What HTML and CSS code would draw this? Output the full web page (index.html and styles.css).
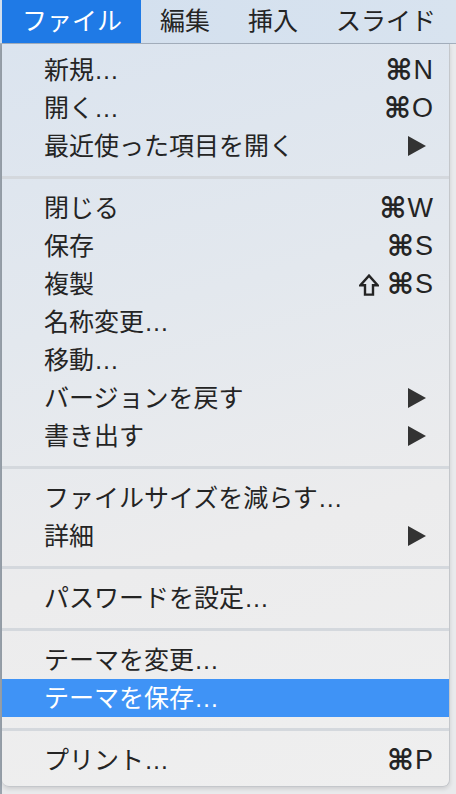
FILE: index.html
```html
<!DOCTYPE html>
<html lang="ja">
<head>
<meta charset="utf-8">
<title>ファイル メニュー</title>
<link rel="stylesheet" href="styles.css">
</head>
<body>
<div class="screen">
  <nav class="menubar">
    <span class="mb-item active">ファイル</span>
    <span class="mb-item">編集</span>
    <span class="mb-item">挿入</span>
    <span class="mb-item">スライド</span>
  </nav>
  <div class="menu">
    <div class="row"><span class="label">新規…</span><span class="key"><span class="sym">⌘</span>N</span></div>
    <div class="row"><span class="label">開く…</span><span class="key"><span class="sym">⌘</span>O</span></div>
    <div class="row"><span class="label">最近使った項目を開く</span><span class="arrow"></span></div>
    <div class="sep"></div>
    <div class="row"><span class="label">閉じる</span><span class="key"><span class="sym">⌘</span>W</span></div>
    <div class="row"><span class="label">保存</span><span class="key"><span class="sym">⌘</span>S</span></div>
    <div class="row"><span class="label">複製</span><span class="key"><svg class="shift" width="20" height="22" viewBox="0 0 20 22" aria-label="⇧"><path d="M10 1.6 L18.6 11.2 H14 V20.6 H6 V11.2 H1.4 Z" fill="none" stroke="#242424" stroke-width="2.4" stroke-linejoin="miter"/></svg><span class="sym">⌘</span>S</span></div>
    <div class="row"><span class="label">名称変更…</span></div>
    <div class="row"><span class="label">移動…</span></div>
    <div class="row"><span class="label">バージョンを戻す</span><span class="arrow"></span></div>
    <div class="row"><span class="label">書き出す</span><span class="arrow"></span></div>
    <div class="sep"></div>
    <div class="row"><span class="label">ファイルサイズを減らす…</span></div>
    <div class="row"><span class="label">詳細</span><span class="arrow"></span></div>
    <div class="sep"></div>
    <div class="row"><span class="label">パスワードを設定…</span></div>
    <div class="sep"></div>
    <div class="row"><span class="label">テーマを変更…</span></div>
    <div class="row selected"><span class="label">テーマを保存…</span></div>
    <div class="sep"></div>
    <div class="row"><span class="label">プリント…</span><span class="key"><span class="sym">⌘</span>P</span></div>
  </div>
</div>
</body>
</html>
```

FILE: styles.css
```css
html, body {
  margin: 0;
  padding: 0;
}
body {
  width: 456px;
  height: 794px;
  overflow: hidden;
  background: #e6e7e9;
  font-family: "Liberation Sans", "Noto Sans CJK JP", "DejaVu Sans", sans-serif;
  color: #242424;
}
.screen {
  width: 456px;
  height: 794px;
  background: linear-gradient(90deg, #9aa3ad 0, #9aa3ad 2px, #e9eaec 2px);
}
.menubar {
  display: flex;
  height: 43px;
  padding-left: 2px;
  background: linear-gradient(90deg, #d2dfee, #d8e3ef);
  border-bottom: 1px solid #a3afbd;
  font-size: 25px;
  line-height: 43px;
}
.mb-item {
  padding: 0 19px;
  color: #242424;
}
.mb-item.active {
  background: #1f7ae6;
  color: #ffffff;
  padding-left: 20px;
}
.menu {
  margin-left: 2px;
  width: 448px;
  height: 743px;
  box-sizing: border-box;
  padding: 7px 0 8px;
  background: linear-gradient(165deg, #dbe4ef 0%, #e3e8ee 35%, #ececed 65%, #efefef 100%);
  border-right: 1px solid #c4c7cb;
  border-bottom: 1px solid #c4c7cb;
  border-radius: 0 0 7px 7px;
  box-shadow: 0 2px 4px rgba(0, 0, 0, 0.12);
  font-size: 25px;
}
.row {
  display: flex;
  align-items: center;
  justify-content: space-between;
  height: 38px;
  line-height: 38px;
  padding: 0 16px 0 42px;
  white-space: nowrap;
}
.row.selected {
  background: #3f93f6;
  color: #ffffff;
}
.key {
  display: flex;
  align-items: center;
  font-size: 27px;
  color: #242424;
}
.sym {
  font-family: "DejaVu Sans", sans-serif;
  font-weight: bold;
  font-size: 29px;
  margin-right: 1px;
}
.shift {
  display: block;
  flex: none;
  margin-right: 8px;
  margin-top: 1px;
}
.arrow {
  width: 0;
  height: 0;
  margin-right: 7px;
  border-top: 10px solid transparent;
  border-bottom: 10px solid transparent;
  border-left: 18px solid #333333;
}
.sep {
  height: 24px;
  display: flex;
  align-items: center;
}
.sep::before {
  content: "";
  display: block;
  width: 100%;
  height: 3px;
  background: #d4d8dd;
}
```
